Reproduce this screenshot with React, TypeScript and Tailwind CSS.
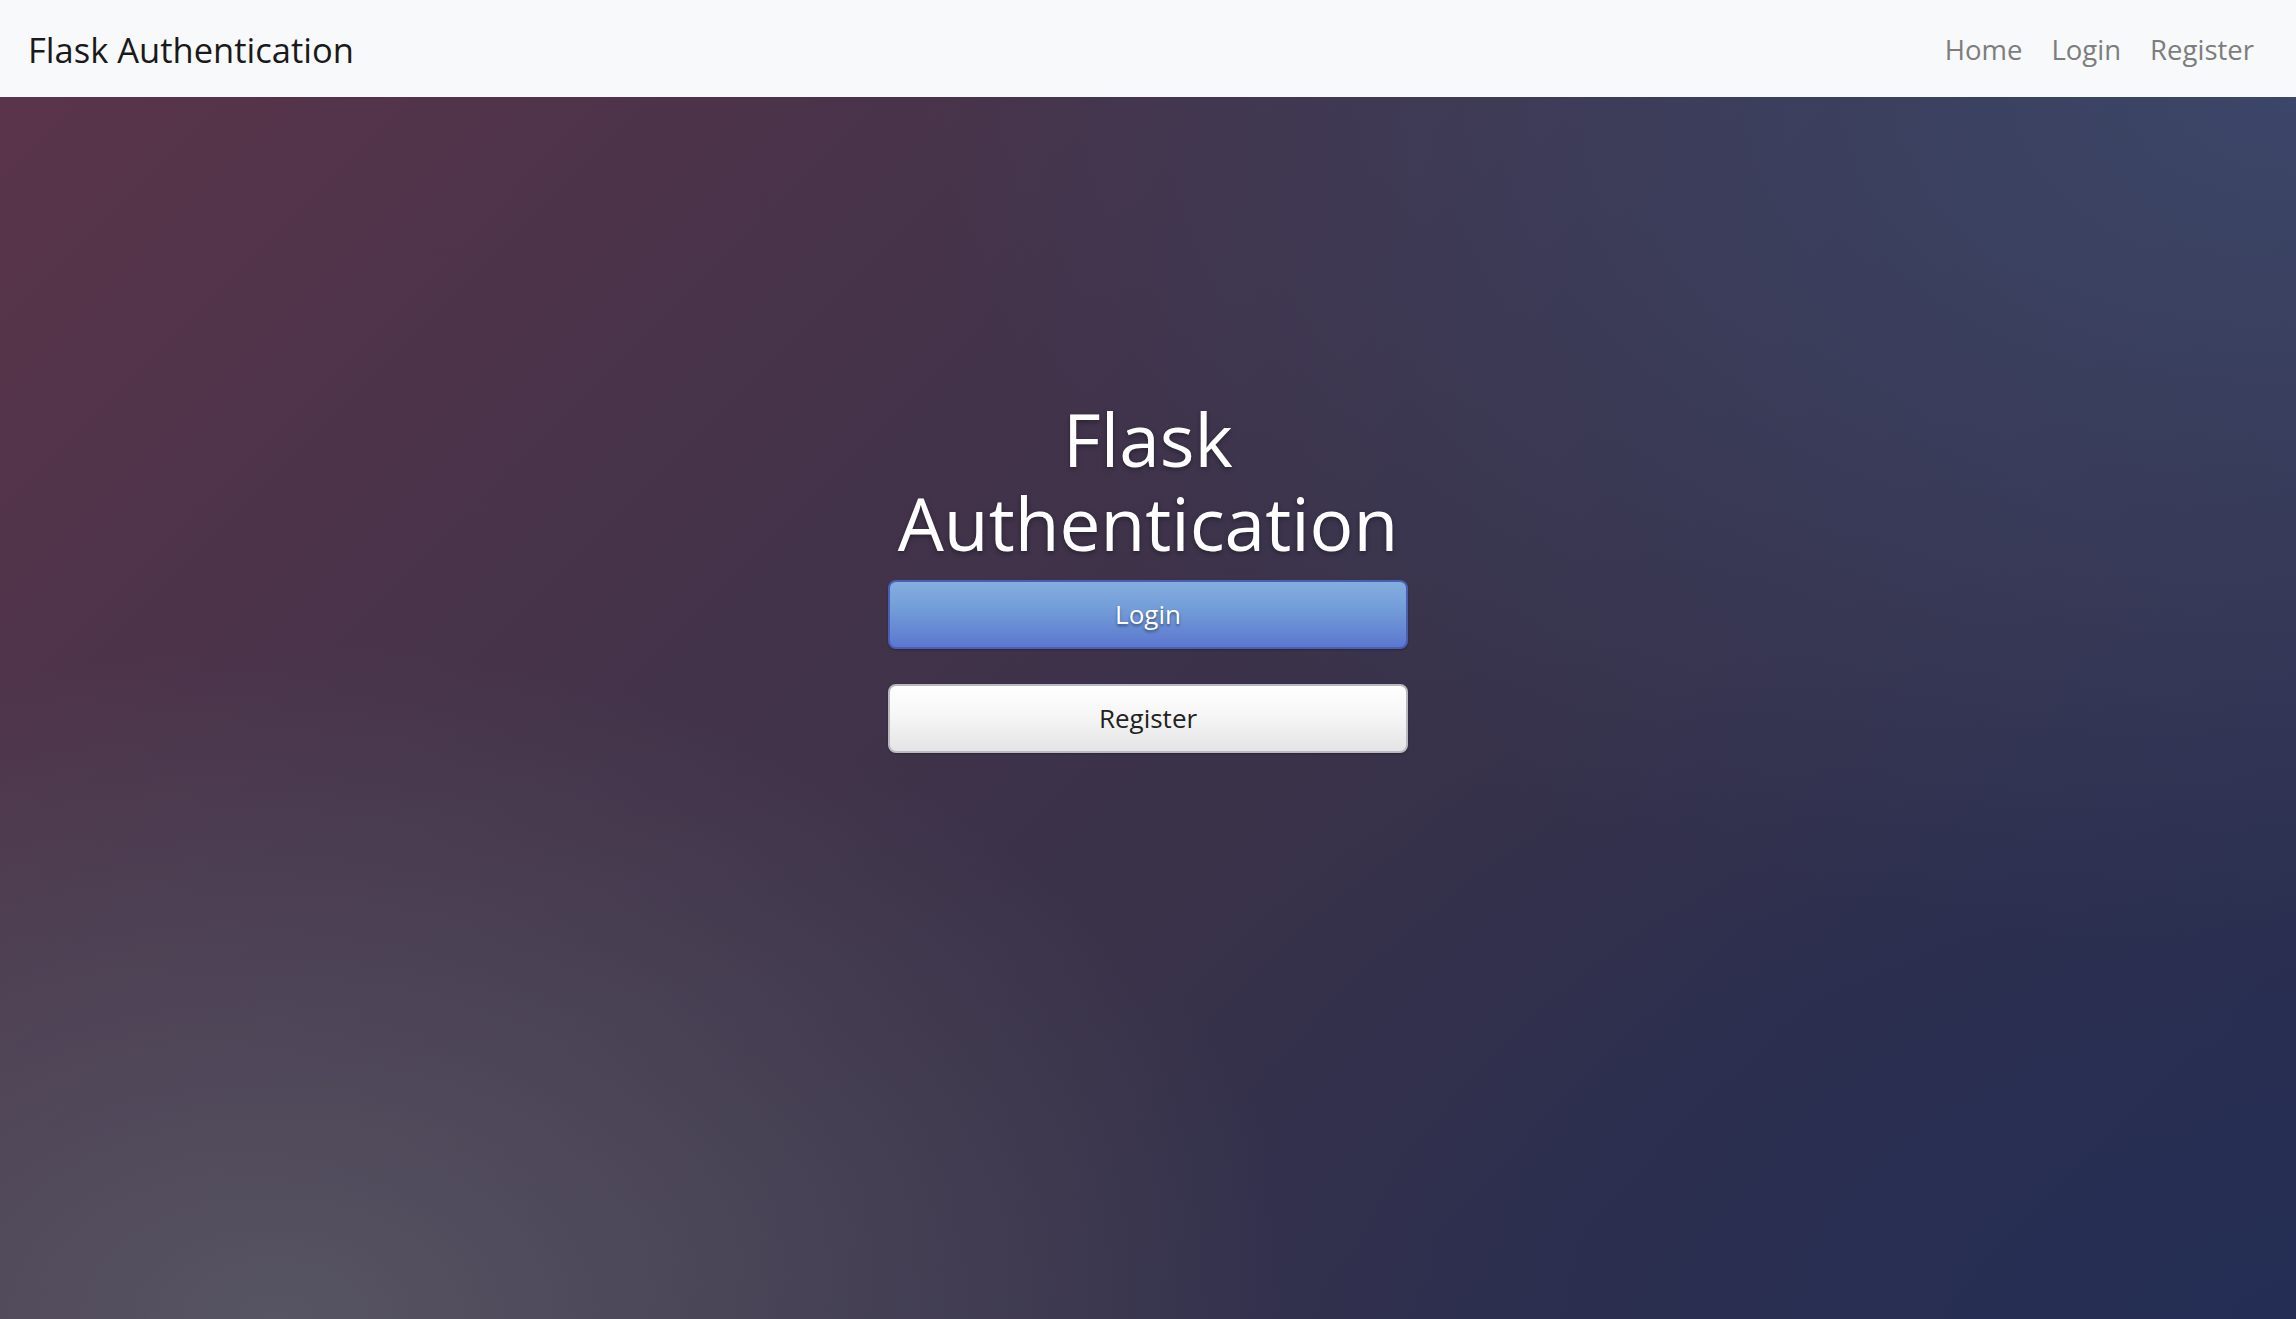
import React from "react";

export default function App() {
  return (
    <div className="min-h-screen flex flex-col font-['Open_Sans',sans-serif]">
      <nav className="h-[97px] flex items-center justify-between bg-[#f8f9fa] pl-[28px] pr-[28px] pt-[2px] shrink-0">
        <a className="text-[34.5px] text-[#1a1a1a]">Flask Authentication</a>
        <div className="flex items-center gap-[29px] pr-[14px] text-[27.5px] text-[#7d7d7e]">
          <a>Home</a>
          <a>Login</a>
          <a>Register</a>
        </div>
      </nav>
      <main className="flex-1 flex flex-col items-center pt-[300px] bg-[radial-gradient(ellipse_45%_55%_at_12%_100%,rgba(88,86,100,0.95)_0%,rgba(88,86,100,0)_100%),radial-gradient(ellipse_60%_70%_at_100%_0%,rgba(60,70,104,1)_0%,rgba(60,70,104,0)_100%),radial-gradient(ellipse_55%_60%_at_100%_100%,rgba(36,46,84,1)_0%,rgba(36,46,84,0)_100%),linear-gradient(135deg,#5a344a_0%,#46334a_30%,#393249_55%,#2b2d4e_100%)]">
        <h1 className="text-center text-white text-[73px] leading-[84px] font-normal mb-[15px] [text-shadow:0_2px_5px_rgba(0,0,0,0.35)]">
          Flask
          <br />
          Authentication
        </h1>
        <button className="w-[520px] h-[69px] rounded-[8px] border-2 border-[#4a5fb3] bg-[linear-gradient(180deg,#84aede_0%,#719bd8_45%,#5b77cf_100%)] text-white text-[26px] [text-shadow:0_2px_3px_rgba(0,0,0,0.45)] shadow-[0_1px_2px_rgba(0,0,0,0.3)]">
          Login
        </button>
        <button className="mt-[35px] w-[520px] h-[69px] rounded-[8px] border-2 border-[#b9b9c0] bg-[linear-gradient(180deg,#ffffff_0%,#f6f6f6_45%,#e4e4e6_100%)] text-[#222222] text-[26px] shadow-[0_1px_2px_rgba(0,0,0,0.25)]">
          Register
        </button>
      </main>
    </div>
  );
}
